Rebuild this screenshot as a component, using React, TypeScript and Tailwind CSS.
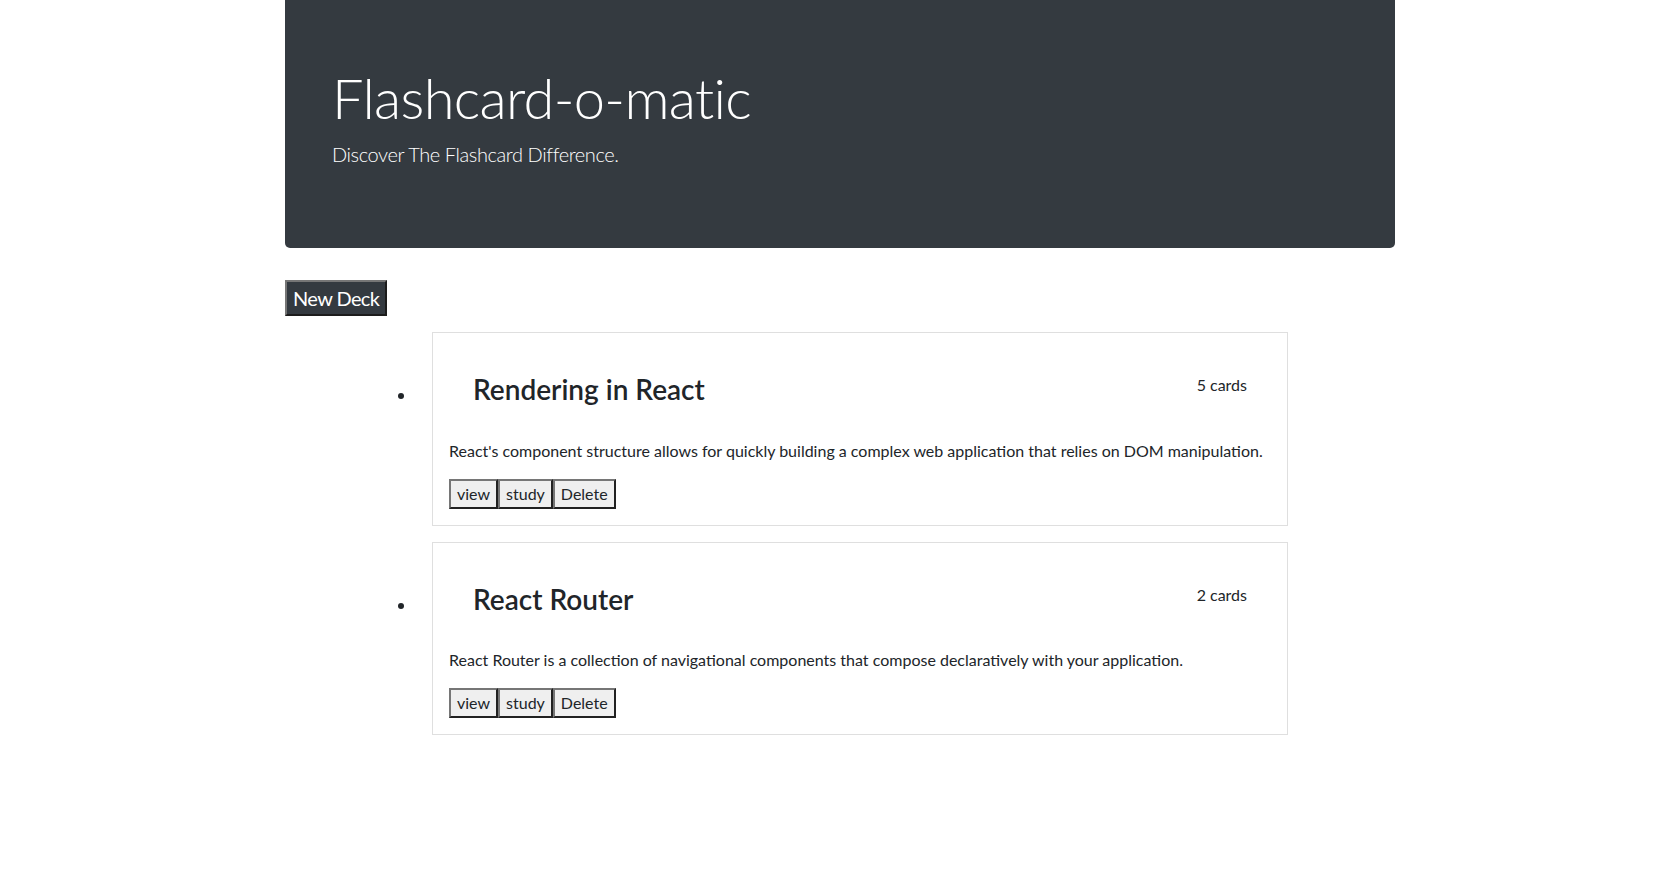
import React from 'react'

type Deck = {
  id: number
  name: string
  description: string
  cards: number
}

const decks: Deck[] = [
  {
    id: 1,
    name: 'Rendering in React',
    description:
      "React's component structure allows for quickly building a complex web application that relies on DOM manipulation.",
    cards: 5,
  },
  {
    id: 2,
    name: 'React Router',
    description:
      'React Router is a collection of navigational components that compose declaratively with your application.',
    cards: 2,
  },
]

// plain browser-looking buttons (outset border look)
const smallBtn =
  'bg-[#efefef] text-[#212529] text-base leading-6 px-1.5 py-px border-2 border-t-[#767676] border-l-[#767676] border-b-[#212121] border-r-[#212121]'

function DeckCard({ deck }: { deck: Deck }) {
  return (
    <li className="flex items-start mb-4">
      <span className="ml-[73px] mt-[61px] w-1.5 h-1.5 rounded-full bg-[#212529] shrink-0" />
      <div className="ml-[28px] w-[856px] border border-[#dfdfdf] bg-white p-4">
        <div className="flex items-start justify-between px-6 py-6">
          <h3 className="text-[28px] font-semibold leading-[1.2] mb-2">{deck.name}</h3>
          <span className="text-base leading-6">{deck.cards} cards</span>
        </div>
        <p className="text-base leading-6 mb-4">{deck.description}</p>
        <div className="flex">
          <button className={smallBtn}>view</button>
          <button className={smallBtn}>study</button>
          <button className={smallBtn}>Delete</button>
        </div>
      </div>
    </li>
  )
}

export default function App() {
  return (
    <div className="min-h-screen bg-white text-[#212529] font-['Lato','Open_Sans',sans-serif]">
      <div className="mx-auto w-[1110px]">
        {/* Jumbotron */}
        <header className="bg-[#343a40] text-white rounded-b-[5px] px-8 pt-16 pb-[63px]">
          <div className="px-[15px]">
            <h1 className="text-[56px] font-light leading-[1.2] tracking-[-0.012em] mb-2">Flashcard-o-matic</h1>
            <p className="text-xl font-light leading-normal tracking-[-0.02em] mb-4">
              Discover The Flashcard Difference.
            </p>
          </div>
        </header>

        <div className="mt-8">
          <button className="bg-[#343a40] text-white text-xl leading-[30px] tracking-[-0.03em] px-1.5 py-px border-2 border-t-[#767676] border-l-[#767676] border-b-[#1c1c1c] border-r-[#1c1c1c]">
            New Deck
          </button>
        </div>

        <ul className="mt-4 pl-10">
          {decks.map((deck) => (
            <DeckCard key={deck.id} deck={deck} />
          ))}
        </ul>
      </div>
    </div>
  )
}
